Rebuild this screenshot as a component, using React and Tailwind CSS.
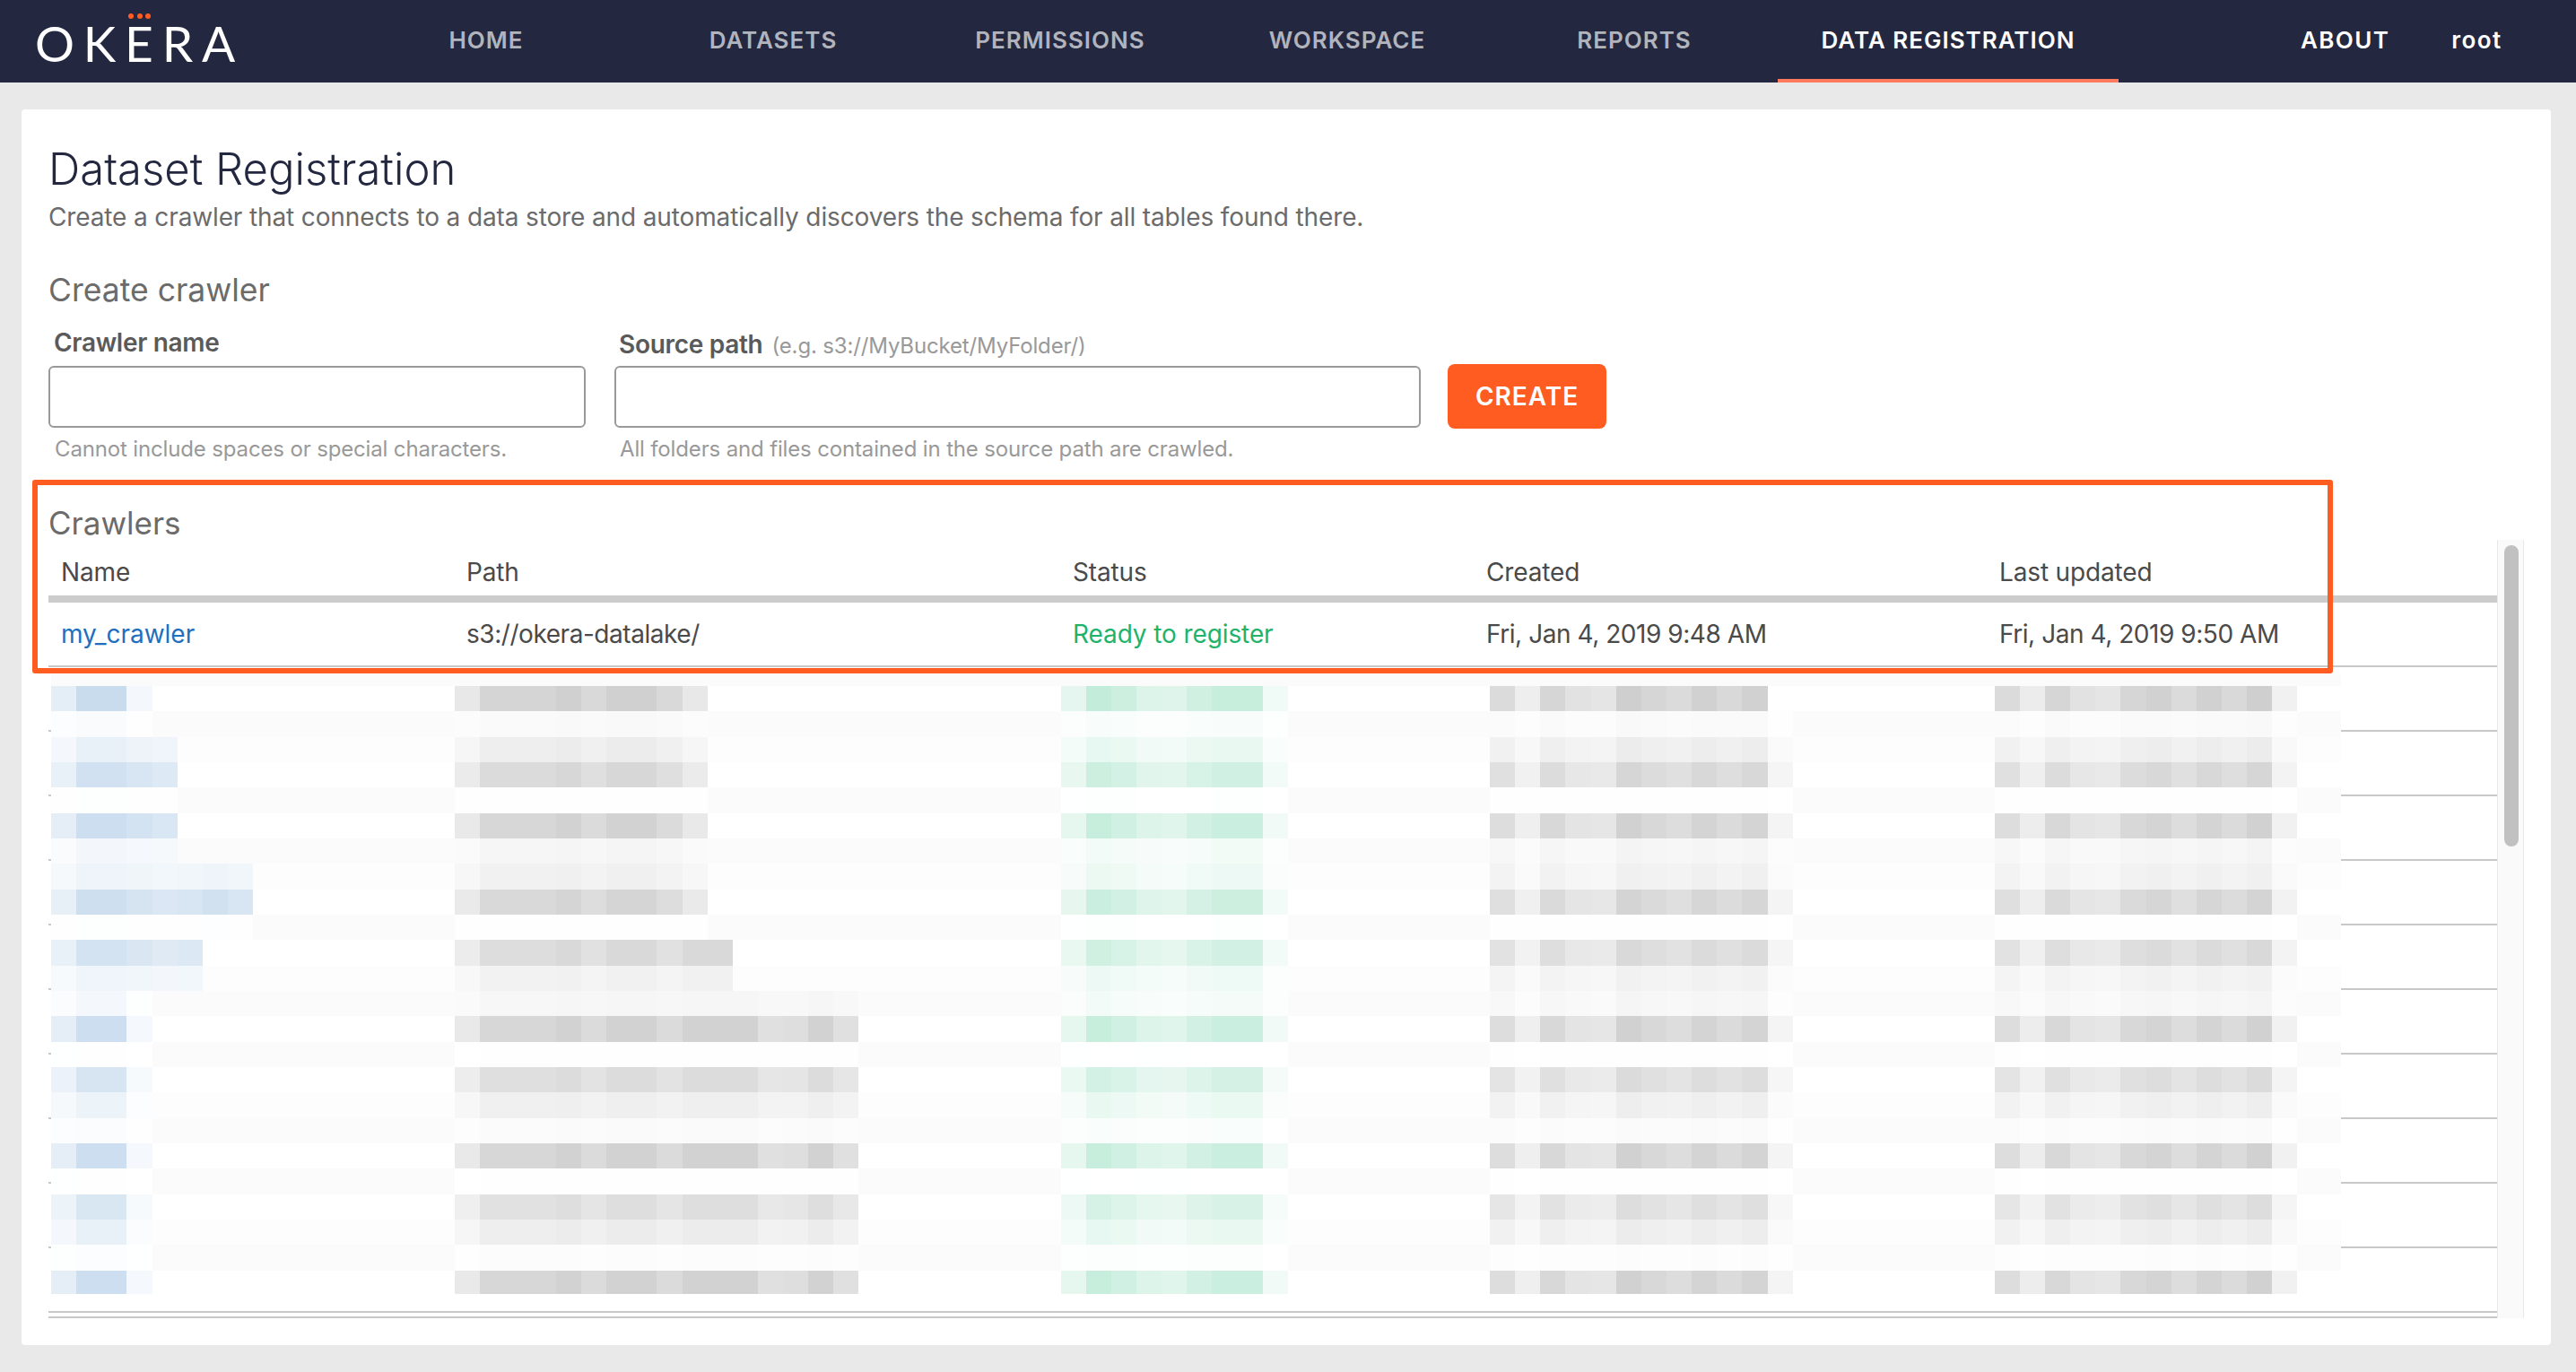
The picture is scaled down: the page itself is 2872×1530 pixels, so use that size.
import React from "react";

const tabs = ["HOME", "DATASETS", "PERMISSIONS", "WORKSPACE", "REPORTS"];

// blurred rows of the table: strength of the row, cells of name / path text
const mosaicRows = [
  [1, 4, 10], [0.12, 4, 10], [0.4, 5, 10], [0.85, 5, 10], [0.03, 5, 10],
  [0.95, 5, 10], [0.22, 5, 10], [0.32, 8, 10], [0.9, 8, 10], [0.03, 8, 10],
  [0.8, 6, 11], [0.3, 6, 11], [0.2, 4, 16], [0.95, 4, 16], [0.02, 4, 16],
  [0.75, 4, 16], [0.35, 4, 16], [0.1, 4, 16], [0.95, 4, 16], [0.02, 4, 16],
  [0.7, 4, 16], [0.4, 4, 16], [0.06, 4, 16], [0.95, 4, 16],
];

const nameWeights = [0.5, 1, 1, 0.85, 0.75, 0.8, 0.95, 0.8];
const pathWeights = [0.5, 0.9, 0.9, 0.9, 1, 0.8, 1, 1, 0.8, 1, 1, 1, 0.7, 0.75, 1, 0.7];
const statusWeights = [0.45, 1, 0.85, 0.6, 0.55, 0.8, 0.95, 0.95, 0.25];
const createdWeights = [0.75, 0.35, 0.85, 0.6, 0.55, 1, 0.85, 0.75, 0.95, 0.8, 0.95, 0.25];
const updatedWeights = [0.75, 0.4, 0.85, 0.6, 0.55, 0.85, 0.95, 0.75, 0.95, 0.8, 1, 0.3];

const cellW = 28.14;
const cellH = 28.33;

function mix(rgb, t) {
  const c = rgb.map((v) => Math.round(255 - (255 - v) * Math.min(t, 1)));
  return `rgb(${c[0]},${c[1]},${c[2]})`;
}

function Mosaic() {
  const rects = [];
  const put = (key, col, y, w, h, fill) =>
    rects.push(<rect key={key} x={col * cellW} y={y} width={w * cellW} height={h} fill={fill} />);

  put("top", 0, 0, 91, 13, "#fbfbfb");
  mosaicRows.forEach(([s, n, p], r) => {
    const y = 13 + r * cellH;
    const h = r === 23 ? 26 : cellH;
    put(`bg${r}`, 0, y, 91, h, s < 0.25 ? "#fbfbfb" : s < 0.5 ? "#fdfdfd" : "#ffffff");
    const cells = (list, start, rgb, len) => {
      list.slice(0, len).forEach((w, i) => {
        let weight = w;
        if (len === 10 && i === 9) weight = 0.5;
        if (start === 0 && len === 4 && i === 3) weight = 0.2;
        put(`${r}-${start}-${i}`, start + i, y, 1, h, mix(rgb, Math.max(weight * s, s < 0.1 ? 0 : 0.02)));
      });
    };
    cells(nameWeights, 0, [201, 220, 238], n);
    cells(pathWeights, 16, [208, 208, 208], p);
    cells(statusWeights, 40, [196, 236, 219], 9);
    cells(createdWeights, 57, [207, 207, 207], r === 0 ? 11 : 12);
    cells(updatedWeights, 77, [207, 207, 207], 12);
  });

  return (
    <svg
      className="absolute left-[33px] top-[630px]"
      width="2553"
      height="692"
      shapeRendering="crispEdges"
    >
      {rects}
    </svg>
  );
}

function Logo() {
  return (
    <div className="relative w-[339px] pl-[39px] h-[92px] flex items-center">
      <span className="font-['Lato',sans-serif] text-[55px] leading-none text-white tracking-[9.8px] mt-[5px]">
        OKERA
      </span>
      <div className="absolute left-[143px] top-[15px] flex gap-[3.5px]">
        <div className="w-[6px] h-[6px] rounded-full bg-[#ff5c22]"></div>
        <div className="w-[6px] h-[6px] rounded-full bg-[#ff5c22]"></div>
        <div className="w-[6px] h-[6px] rounded-full bg-[#ff5c22]"></div>
      </div>
    </div>
  );
}

const App = () => {
  return (
    <div className="w-full h-screen overflow-hidden bg-[#e9e9e9] font-['Inter',sans-serif]">
      {/* Top Navigation Bar */}
      <div className="h-[92px] bg-[#232840] flex">
        <Logo />
        <div className="flex ml-[43px] text-[26px] font-semibold tracking-[1px]">
          {tabs.map((tab) => (
            <div key={tab} className="w-[320px] h-[92px] flex items-center justify-center pb-[4px] text-[#b2b4bd]">
              {tab}
            </div>
          ))}
          <div className="w-[380px] h-[92px] flex items-center justify-center pt-[1px] text-white border-b-4 border-[#ff7a5c]">
            DATA REGISTRATION
          </div>
        </div>
        <div className="flex items-center pb-[4px] text-white text-[26px] font-semibold tracking-[1.4px]">
          <span className="ml-[203px]">ABOUT</span>
          <span className="ml-[69px]">root</span>
        </div>
      </div>

      {/* Main Content */}
      <div className="relative mx-6 mt-[30px] w-[2820px] h-[1378px] bg-white rounded-[4px] pl-[30px] pt-[40px]">
        <div className="text-[49px] leading-[54px] text-[#232840] font-light">Dataset Registration</div>
        <div className="mt-[7px] text-[28px] leading-[38px] text-[#6b6b6b] tracking-[-0.13px]">
          Create a crawler that connects to a data store and automatically discovers the schema for all tables found there.
        </div>
        <div className="mt-[43px] text-[35.5px] leading-[40px] text-[#6b6b6b]">Create crawler</div>

        {/* Create form */}
        <div className="flex mt-[23px]">
          <div className="w-[599px]">
            <div className="pl-[6px] text-[28px] leading-[30px] font-semibold text-[#5a5a5a] tracking-[-0.3px]">Crawler name</div>
            <div className="mt-[11px] h-[69px] border-2 border-[#999999] rounded-[6px]"></div>
            <div className="mt-[12px] pl-[7px] text-[24px] leading-[24px] text-[#999999] tracking-[-0.15px]">
              Cannot include spaces or special characters.
            </div>
          </div>
          <div className="w-[899px] ml-[32px]">
            <div className="h-[30px] pl-[5px] pt-[2px] text-[28px] leading-[30px] font-semibold text-[#5a5a5a] tracking-[-0.3px]">
              Source path
              <span className="ml-[10px] text-[24px] leading-none font-normal text-[#999999] tracking-[-0.15px]">(e.g. s3://MyBucket/MyFolder/)</span>
            </div>
            <div className="mt-[11px] h-[69px] border-2 border-[#999999] rounded-[6px]"></div>
            <div className="mt-[12px] pl-[6px] text-[24px] leading-[24px] text-[#999999] tracking-[-0.15px]">
              All folders and files contained in the source path are crawled.
            </div>
          </div>
          <button className="ml-[30px] mt-[39px] w-[177px] h-[72px] bg-[#ff5c22] rounded-[8px] text-white text-[28px] font-semibold tracking-[1px]">
            CREATE
          </button>
        </div>

        <div className="mt-[50px] h-[39px] text-[35px] leading-[41px] text-[#6b6b6b]">Crawlers</div>

        {/* Crawlers table */}
        <div className="flex h-[868px]">
          <div className="w-[2730px] border-b-2 border-[#c8c8c8]">
            <div className="h-[70px] grid grid-cols-[452px_676px_461px_572px_569px] border-b-8 border-[#cccccc] text-[28px] leading-[38px] text-[#4a4a4a] pt-[17px] tracking-[-0.15px]">
              <div className="pl-[14px]">Name</div>
              <div className="pl-[14px]">Path</div>
              <div className="pl-[14px]">Status</div>
              <div className="pl-[14px]">Created</div>
              <div className="pl-[14px]">Last updated</div>
            </div>
            <div className="h-[72px] grid grid-cols-[452px_676px_461px_572px_569px] border-b-2 border-[#c8c8c8] items-center text-[28px] text-[#4a4a4a]">
              <div className="pl-[14px] text-[#1f6fbf]">my_crawler</div>
              <div className="pl-[14px] tracking-[-0.45px]">s3://okera-datalake/</div>
              <div className="pl-[14px] text-[#1fb36b] tracking-[-0.1px]">Ready to register</div>
              <div className="pl-[14px] tracking-[-0.45px]">Fri, Jan 4, 2019 9:48 AM</div>
              <div className="pl-[14px] tracking-[-0.45px]">Fri, Jan 4, 2019 9:50 AM</div>
            </div>
            {[0, 1, 2, 3, 4, 5, 6, 7, 8, 9].map((row) => (
              <div key={row} className="h-[72px] border-b-2 border-[#c8c8c8]"></div>
            ))}
          </div>
          <div className="w-[30px] bg-[#fafafa] border-x border-[#e8e8e8] pt-[6px] pl-[7px]">
            <div className="w-[16px] h-[336px] rounded-full bg-[#c1c1c1]"></div>
          </div>
        </div>

        <Mosaic />

        {/* Highlight around the crawlers section */}
        <div className="absolute left-[12px] top-[413px] w-[2565px] h-[216px] border-[6px] border-[#ff5c22] rounded-[3px]"></div>
      </div>
    </div>
  );
};

export default App;
